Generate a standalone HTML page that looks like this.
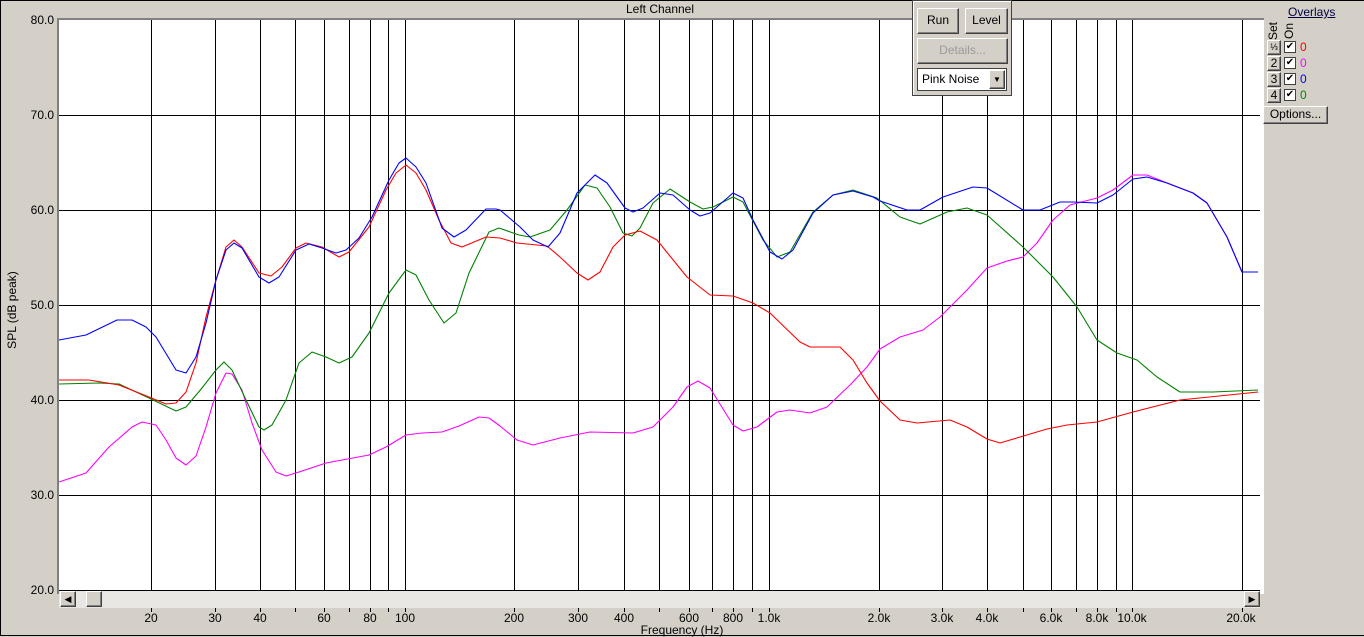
<!DOCTYPE html>
<html><head><meta charset="utf-8"><style>
body{margin:0;width:1364px;height:637px;background:#d4d0c8;font-family:"Liberation Sans",Arial,sans-serif;font-size:12px;overflow:hidden;position:relative}
.a{position:absolute}
.btn{position:absolute;background:#d4d0c8;border:1px solid;border-color:#fff #404040 #404040 #fff;box-shadow:inset -1px -1px 0 #808080;text-align:center;color:#000;font-size:12px;box-sizing:border-box}
.yl{position:absolute;left:20px;width:34px;text-align:right;font-size:12px}
.xl{position:absolute;top:611px;width:50px;margin-left:-25px;text-align:center;font-size:12px}
</style></head><body>
<div class="a" style="left:0;top:0;width:1364px;height:636px;border-top:1px solid #000;border-left:1px solid #000;border-bottom:1px solid #000;box-sizing:border-box"></div>
<div class="a" style="left:600px;top:2px;width:120px;text-align:center">Left Channel</div>
<div class="a" style="left:57px;top:18px;width:1205px;height:574px;border-left:2px solid #808080;border-top:2px solid #808080;background:#fff"></div>
<div class="a" style="left:-38px;top:303px;width:100px;text-align:center;transform:rotate(-90deg);font-size:12px">SPL (dB peak)</div>
<div class="yl" style="top:13px">80.0</div><div class="yl" style="top:108px">70.0</div><div class="yl" style="top:203px">60.0</div><div class="yl" style="top:298px">50.0</div><div class="yl" style="top:393px">40.0</div><div class="yl" style="top:488px">30.0</div><div class="yl" style="top:583px">20.0</div>
<svg class="a" style="left:0;top:0" width="1364" height="637">
<g stroke="#000" stroke-width="1" fill="none" shape-rendering="crispEdges">
<path d="M59 115.5H1260M59 210.5H1260M59 305.5H1260M59 400.5H1260M59 495.5H1260M59 590.5H1260"/>
<path d="M151.5 20V590M215.5 20V590M260.5 20V590M295.5 20V590M324.5 20V590M349.5 20V590M370.5 20V590M388.5 20V590M405.5 20V590M514.5 20V590M578.5 20V590M624.5 20V590M659.5 20V590M689.5 20V590M712.5 20V590M733.5 20V590M752.5 20V590M769.5 20V590M879.5 20V590M942.5 20V590M987.5 20V590M1023.5 20V590M1051.5 20V590M1076.5 20V590M1097.5 20V590M1116.5 20V590M1132.5 20V590M1242.5 20V590"/>
<path d="M151.5 608v4M215.5 608v4M260.5 608v4M295.5 608v4M324.5 608v4M349.5 608v4M370.5 608v4M388.5 608v4M405.5 608v4M514.5 608v4M578.5 608v4M624.5 608v4M659.5 608v4M689.5 608v4M712.5 608v4M733.5 608v4M752.5 608v4M769.5 608v4M879.5 608v4M942.5 608v4M987.5 608v4M1023.5 608v4M1051.5 608v4M1076.5 608v4M1097.5 608v4M1116.5 608v4M1132.5 608v4M1242.5 608v4"/>
</g>
<g fill="none" stroke-width="1.1" stroke-linejoin="round">
<polyline stroke="#ff00ff" points="59,482 86,473 109,447 132,427 142,422 156,425 166,440 176,458 186,465 196,456 206,427 216,393 226,373 232,374 242,390 252,423 262,450 276,472 286,476 299,472 326,463 369,455 386,447 406,435 422,433 442,432 459,426 479,417 489,418 500,426 517,440 533,445 560,438 590,432 633,433 653,427 673,407 687,387 698,381 710,388 733,425 743,431 757,427 777,412 790,410 810,413 827,407 850,385 867,367 880,349 900,337 923,330 940,317 967,290 987,268 1007,261 1023,257 1037,243 1053,220 1070,205 1097,198 1113,190 1133,175 1147,175 1167,183 1193,193 1207,203 1227,237 1242,272 1258,272"/>
<polyline stroke="#008000" points="59,384 99,383 119,384 149,398 176,411 186,407 202,388 216,370 224,362 232,370 246,400 259,427 264,430 272,425 286,400 299,363 312,352 326,357 339,363 352,357 369,333 389,293 406,270 416,275 429,300 444,323 456,313 469,273 489,232 499,228 519,235 530,237 550,230 567,210 585,185 597,188 610,207 623,233 632,236 640,228 653,203 670,189 690,202 703,209 713,207 733,197 743,202 763,240 777,257 790,252 813,212 833,195 853,190 877,198 900,217 920,224 947,212 967,208 987,215 1023,247 1053,277 1077,307 1097,340 1117,353 1137,360 1157,377 1180,392 1213,392 1258,390"/>
<polyline stroke="#ff0000" points="59,380 89,380 119,385 149,397 166,404 176,403 186,392 196,363 206,317 216,280 226,247 234,240 242,247 259,273 271,276 282,267 296,248 306,243 322,247 339,257 349,252 369,227 386,190 396,173 406,165 416,173 426,190 439,220 451,243 462,247 486,237 500,238 517,243 547,246 560,257 577,273 588,280 600,272 613,247 625,235 640,231 657,240 687,277 710,295 733,296 753,303 770,313 800,342 810,347 840,347 853,360 867,383 880,401 900,420 917,423 950,420 967,427 987,439 1000,443 1020,437 1047,429 1067,425 1097,422 1133,412 1180,400 1258,392"/>
<polyline stroke="#0000ff" points="59,340 86,335 117,320 132,320 146,327 156,337 176,370 186,373 196,357 206,323 216,280 226,250 234,243 242,248 259,277 269,283 279,277 296,250 309,244 322,248 336,253 346,250 359,238 372,217 389,180 399,163 406,158 416,167 426,183 442,228 454,237 466,230 486,209 496,209 500,210 520,227 533,240 548,247 560,233 577,193 595,175 607,183 625,208 633,212 643,208 660,193 673,195 690,210 700,216 710,213 733,193 743,198 753,220 770,252 782,259 793,250 813,213 833,195 853,191 873,197 880,201 907,210 920,210 943,197 973,187 987,188 1023,210 1040,210 1060,202 1073,202 1097,203 1113,195 1133,179 1147,177 1167,183 1193,193 1207,203 1227,237 1242,272 1258,272"/>
</g>
</svg>
<div class="a" style="left:59px;top:591px;width:1201px;height:17px;background:#e9e7e3"></div>
<div class="btn" style="left:60px;top:591px;width:16px;height:16px;font-size:9px;line-height:14px">◀</div>
<div class="btn" style="left:86px;top:591px;width:16px;height:16px"></div>
<div class="btn" style="left:1244px;top:591px;width:16px;height:16px;font-size:9px;line-height:14px">▶</div>
<div class="xl" style="left:151px">20</div><div class="xl" style="left:215px">30</div><div class="xl" style="left:260px">40</div><div class="xl" style="left:324px">60</div><div class="xl" style="left:370px">80</div><div class="xl" style="left:405px">100</div><div class="xl" style="left:514px">200</div><div class="xl" style="left:578px">300</div><div class="xl" style="left:624px">400</div><div class="xl" style="left:689px">600</div><div class="xl" style="left:733px">800</div><div class="xl" style="left:769px">1.0k</div><div class="xl" style="left:879px">2.0k</div><div class="xl" style="left:942px">3.0k</div><div class="xl" style="left:987px">4.0k</div><div class="xl" style="left:1051px">6.0k</div><div class="xl" style="left:1097px">8.0k</div><div class="xl" style="left:1132px">10.0k</div><div class="xl" style="left:1241px">20.0k</div>
<div class="a" style="left:632px;top:623px;width:100px;text-align:center">Frequency (Hz)</div>
<div class="a" style="left:912px;top:0;width:100px;height:96px;background:#d4d0c8;border:1px solid #404040;box-sizing:border-box;box-shadow:inset 1px 1px 0 #fff"></div>
<div class="btn" style="left:917px;top:8px;width:42px;height:26px;line-height:23px">Run</div>
<div class="btn" style="left:965px;top:8px;width:43px;height:26px;line-height:23px">Level</div>
<div class="btn" style="left:917px;top:38px;width:91px;height:26px;line-height:23px;color:#9a9a9a">Details...</div>
<div class="a" style="left:917px;top:68px;width:90px;height:23px;background:#fff;border:1px solid #404040;box-sizing:border-box;line-height:20px;padding-left:4px">Pink Noise</div>
<div class="btn" style="left:989px;top:70px;width:16px;height:19px;font-size:8px;line-height:17px">▼</div>
<div class="a" style="left:1288px;top:5px;text-decoration:underline;color:#000040">Overlays</div>
<div class="a" style="left:1261px;top:24px;width:24px;transform:rotate(-90deg);transform-origin:center;text-align:center">Set</div>
<div class="a" style="left:1277px;top:24px;width:24px;transform:rotate(-90deg);text-align:center">On</div>
<div class="btn" style="left:1267px;top:40px;width:14px;height:15px;font-size:9px;line-height:13px">⅓</div>
<div class="btn" style="left:1267px;top:56px;width:14px;height:15px;line-height:13px">2</div>
<div class="btn" style="left:1267px;top:72px;width:14px;height:15px;line-height:13px">3</div>
<div class="btn" style="left:1267px;top:88px;width:14px;height:15px;line-height:13px">4</div>
<div class="a" style="left:1284px;top:41px;width:12px;height:12px;background:#fff;border:1px solid #404040;box-sizing:border-box;font-size:10px;line-height:10px;text-align:center">✔</div>
<div class="a" style="left:1284px;top:57px;width:12px;height:12px;background:#fff;border:1px solid #404040;box-sizing:border-box;font-size:10px;line-height:10px;text-align:center">✔</div>
<div class="a" style="left:1284px;top:73px;width:12px;height:12px;background:#fff;border:1px solid #404040;box-sizing:border-box;font-size:10px;line-height:10px;text-align:center">✔</div>
<div class="a" style="left:1284px;top:89px;width:12px;height:12px;background:#fff;border:1px solid #404040;box-sizing:border-box;font-size:10px;line-height:10px;text-align:center">✔</div>
<div class="a" style="left:1300px;top:40px;color:#f00">0</div>
<div class="a" style="left:1300px;top:56px;color:#f0f">0</div>
<div class="a" style="left:1300px;top:72px;color:#00f">0</div>
<div class="a" style="left:1300px;top:88px;color:#080">0</div>
<div class="btn" style="left:1263px;top:106px;width:65px;height:18px;line-height:15px">Options...</div>
</body></html>
